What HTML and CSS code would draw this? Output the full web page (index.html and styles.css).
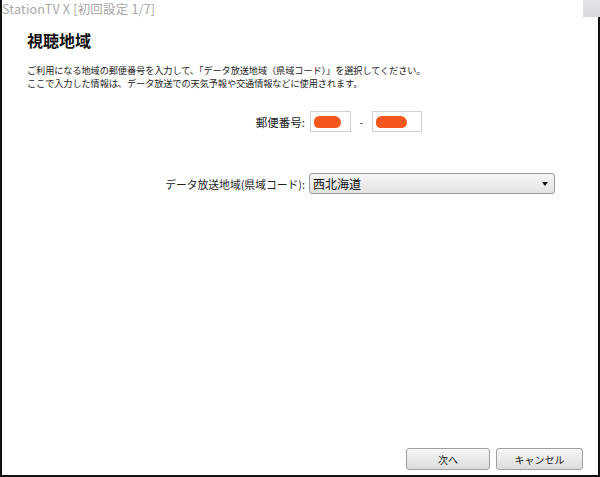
FILE: index.html
```html
<!DOCTYPE html>
<html lang="ja">
<head>
<meta charset="utf-8">
<link rel="stylesheet" href="styles.css">
</head>
<body>
<div class="window">
  <div class="titlebar">StationTV X [初回設定 1/7]</div>
  <div class="close"></div>
  <div class="content">
    <h1 class="heading">視聴地域</h1>
    <p class="desc">ご利用になる地域の郵便番号を入力して、「データ放送地域（県域コード）」を選択してください。<br>ここで入力した情報は、データ放送での天気予報や交通情報などに使用されます。</p>
    <div class="form">
      <div class="label postal-label">郵便番号:</div>
      <div class="postal">
        <div class="input in1"><span class="blob"></span></div>
        <span class="dash">-</span>
        <div class="input in2"><span class="blob"></span></div>
      </div>
      <div class="label row2">データ放送地域(県域コード):</div>
      <div class="select row2"><span>西北海道</span><span class="arrow"></span></div>
    </div>
  </div>
  <div class="footer">
    <button class="btn next">次へ</button>
    <button class="btn cancel">キャンセル</button>
  </div>
</div>
</body>
</html>
```
FILE: styles.css
```css
html, body { margin: 0; padding: 0; background: #fff; }
body { font-family: "Noto Sans CJK JP", "Noto Sans", sans-serif; color: #222; }
.window {
  width: 600px; height: 477px; box-sizing: border-box;
  border: 2px solid #111; border-top: none;
  display: flex; flex-direction: column; position: relative; background: #fff;
}
.titlebar {
  height: 18px; line-height: 18px; font-size: 12.5px; color: #a8a8a8;
  font-family: "Noto Sans CJK JP", sans-serif; letter-spacing: 0.2px;
}
.close {
  position: absolute; top: 0; right: -2px; width: 17px; height: 17px;
  background: linear-gradient(#e4e4e8, #d8d8de);
}
.content { padding: 0 25px; }
.heading {
  margin: 12px 0 0; font-size: 16px; line-height: 20px; font-weight: bold; color: #111;
}
.desc {
  margin: 14px 0 0; font-size: 9.2px; line-height: 12.5px; color: #222; letter-spacing: -0.1px;
}
.form {
  display: grid; grid-template-columns: 278px 1fr; column-gap: 4px;
  margin-top: 22px; align-items: center;
}
.label { text-align: right; font-size: 10.8px; color: #222; }
.postal-label { font-size: 11.5px; }
.row2 { margin-top: 41px; }
.postal { display: flex; align-items: center; padding-left: 1px; }
.input {
  height: 21px; box-sizing: border-box; border: 1px solid #d0d0d0; background: #fff;
  display: flex; align-items: center; padding-left: 3px;
}
.in1 { width: 41px; }
.in2 { width: 50px; }
.dash { width: 21px; text-align: center; font-size: 10px; }
.blob {
  display: block; height: 12px; background: #f5561c; border-radius: 6px 7px 6px 5px;
}
.in1 .blob { width: 27px; }
.in2 .blob { width: 31px; }
.select {
  width: 246px; height: 21px; box-sizing: border-box;
  border: 1px solid #9a9a9a; border-radius: 3px;
  background: linear-gradient(#f6f6f6, #e2e2e2);
  display: flex; align-items: center; justify-content: space-between;
  padding: 0 6px 0 3px; font-size: 12px; color: #111;
}
.arrow {
  width: 0; height: 0; border-left: 3px solid transparent; border-right: 3px solid transparent;
  border-top: 4px solid #111;
}
.footer {
  margin-top: auto; display: flex; justify-content: flex-end; gap: 6px;
  padding: 0 15px 5px 0;
}
.btn {
  height: 22px; box-sizing: border-box; border: 1px solid #a0a0a0; border-radius: 3px;
  background: linear-gradient(#f7f7f7, #dcdcdc);
  font-family: "Noto Sans CJK JP", sans-serif; font-size: 10px; color: #222; padding: 0;
}
.next { width: 84px; }
.cancel { width: 87px; }
```
